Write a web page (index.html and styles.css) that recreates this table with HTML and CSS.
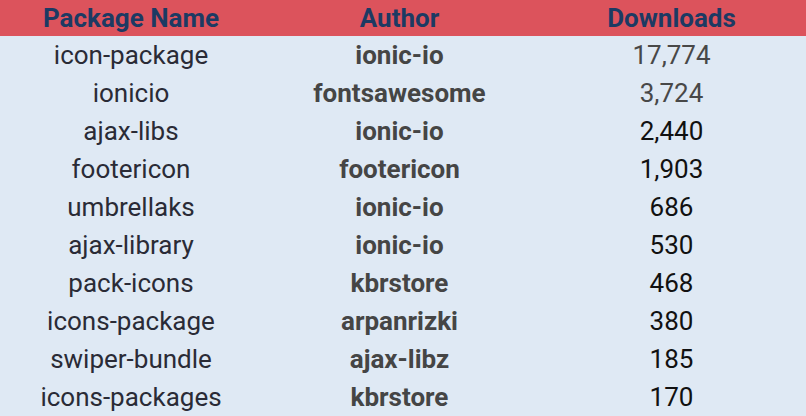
FILE: index.html
```html
<!DOCTYPE html>
<html>
<head>
<meta charset="utf-8">
<link rel="stylesheet" href="styles.css">
</head>
<body>
<table class="pkg-table">
  <colgroup><col class="c1"><col class="c2"><col class="c3"></colgroup>
  <thead>
    <tr><th>Package Name</th><th>Author</th><th>Downloads</th></tr>
  </thead>
  <tbody>
    <tr><td class="name">icon-package</td><td class="author">ionic-io</td><td class="dl muted">17,774</td></tr>
    <tr><td class="name">ionicio</td><td class="author">fontsawesome</td><td class="dl muted">3,724</td></tr>
    <tr><td class="name">ajax-libs</td><td class="author">ionic-io</td><td class="dl">2,440</td></tr>
    <tr><td class="name">footericon</td><td class="author">footericon</td><td class="dl">1,903</td></tr>
    <tr><td class="name">umbrellaks</td><td class="author">ionic-io</td><td class="dl">686</td></tr>
    <tr><td class="name">ajax-library</td><td class="author">ionic-io</td><td class="dl">530</td></tr>
    <tr><td class="name">pack-icons</td><td class="author">kbrstore</td><td class="dl">468</td></tr>
    <tr><td class="name">icons-package</td><td class="author">arpanrizki</td><td class="dl">380</td></tr>
    <tr><td class="name">swiper-bundle</td><td class="author">ajax-libz</td><td class="dl">185</td></tr>
    <tr><td class="name">icons-packages</td><td class="author">kbrstore</td><td class="dl">170</td></tr>
  </tbody>
</table>
</body>
</html>
```
FILE: styles.css
```css
html, body {
  margin: 0;
  padding: 0;
  background: #dfe9f4;
}
body {
  font-family: Roboto, "Liberation Sans", sans-serif;
}
.pkg-table {
  width: 806px;
  border-collapse: collapse;
  table-layout: fixed;
}
.c1 { width: 262px; }
.c2 { width: 275px; }
.c3 { width: 269px; }
.pkg-table th {
  background: #dc535c;
  color: #1c3a63;
  font-weight: 700;
  font-size: 26px;
  height: 36px;
  padding: 0;
  line-height: 36px;
  text-align: center;
}
.pkg-table td {
  height: 38px;
  padding: 0;
  font-size: 26px;
  line-height: 38px;
  text-align: center;
  background: #dfe9f4;
}
.name {
  color: #2a2b36;
}
.author {
  color: #454545;
  font-weight: 700;
}
.dl {
  color: #111;
}
.dl.muted {
  color: #484848;
}
```
